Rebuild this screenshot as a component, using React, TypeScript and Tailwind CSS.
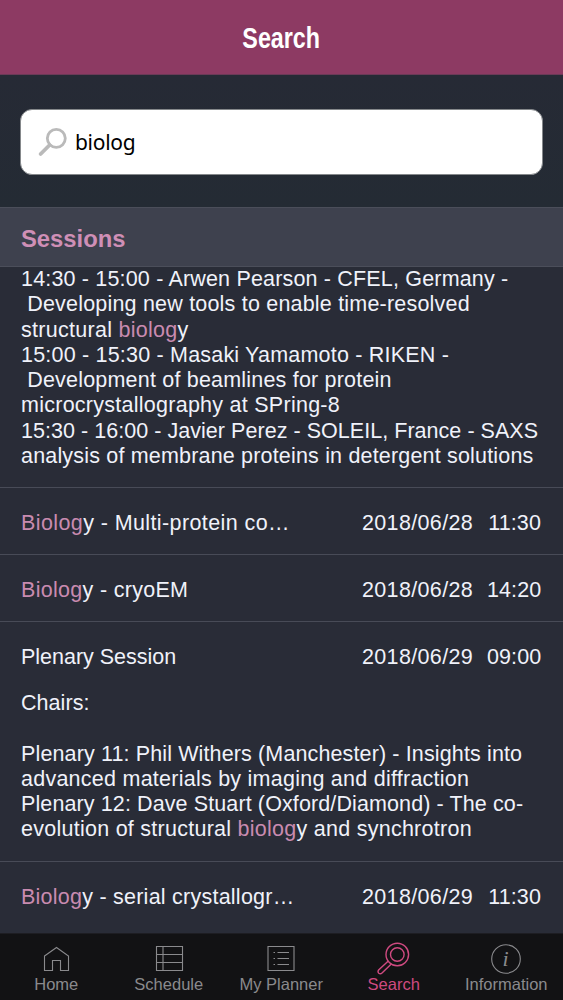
import type { ReactNode } from "react";

function Hit({ children }: { children: ReactNode }) {
  return <span className="text-[#c98bb0]">{children}</span>;
}

function Line({ track, children }: { track: string; children?: ReactNode }) {
  return (
    <div className="h-[25.3px] whitespace-pre">
      <span className={track}>{children}</span>
    </div>
  );
}

function SessionHead({ date, time, track, children }: { date: string; time: string; track: string; children: ReactNode }) {
  return (
    <div className="flex h-[66px] shrink-0 items-center pt-[5px] whitespace-pre">
      <span className={track}>{children}</span>
      <span className="ml-auto w-[125px] tracking-[0.35px]">{date}</span>
      <span className="w-[55px] pr-[1px] text-right tracking-[0.1px]">{time}</span>
    </div>
  );
}

function Tab({ label, active, children }: { label: string; active?: boolean; children: ReactNode }) {
  return (
    <div className={`flex w-[112.5px] shrink-0 flex-col items-center ${active ? "text-[#cf4a80]" : "text-[#8a8a8d]"}`}>
      <svg className="h-[44px] w-[44px] shrink-0" viewBox="0 0 44 44" fill="none" stroke="currentColor" strokeWidth={active ? 1.4 : 1.1}>
        {children}
      </svg>
      <span className="-mt-[4px] text-[16.5px] leading-[20px] whitespace-nowrap">{label}</span>
    </div>
  );
}

export default function App() {
  return (
    <div className="flex h-[1000px] w-[563px] flex-col overflow-hidden bg-[#292c37] font-['Liberation_Sans',Arial,sans-serif] text-[21.5px] leading-[25.3px] text-[#f0f2fa]">
      <header className="flex h-[75px] shrink-0 items-center justify-center border-b border-[#6b3a57] bg-[#8d3a63] pt-[2px]">
        <h1 className="scale-x-[0.79] text-[29.5px] font-bold text-white">Search</h1>
      </header>

      <div className="h-[132px] shrink-0 bg-linear-to-b from-[#262a35] to-[#242b34] px-[20px] pt-[34px]">
        <div className="flex h-[66px] items-center rounded-[12px] border border-[#85888b] bg-white pl-[16px]">
          <svg className="h-[32px] w-[32px] shrink-0" viewBox="0 0 32 32" fill="none" stroke="#bababa">
            <circle cx="19.3" cy="12.3" r="9" strokeWidth="2.8" />
            <path d="M12.6 19 L3.6 28" strokeWidth="3.8" strokeLinecap="round" />
          </svg>
          <span className="ml-[6px] pt-[1px] font-['Noto_Sans',sans-serif] text-[21px] tracking-[-0.3px] text-black">biolog</span>
        </div>
      </div>

      <div className="flex h-[60px] shrink-0 items-center border-y border-[#4b4e5a] bg-[#3e414e] pt-[4px] pl-[21px]">
        <h2 className="text-[23.8px] font-bold text-[#cf8fb6]">Sessions</h2>
      </div>

      <main className="flex min-h-0 flex-1 flex-col">
        <section className="h-[221px] shrink-0 border-b border-[#484b57] pl-[21px]">
          <Line track="tracking-[0.175px]">14:30 - 15:00 - Arwen Pearson - CFEL, Germany -</Line>
          <Line track="tracking-[0.2px]"> Developing new tools to enable time-resolved</Line>
          <Line track="tracking-[0.28px]">structural <Hit>biolog</Hit>y</Line>
          <Line track="tracking-[0.2px]">15:00 - 15:30 - Masaki Yamamoto - RIKEN -</Line>
          <Line track="tracking-[0.2px]"> Development of beamlines for protein</Line>
          <Line track="tracking-[0.26px]">microcrystallography at SPring-8</Line>
          <Line track="tracking-[0.04px]">15:30 - 16:00 - Javier Perez - SOLEIL, France - SAXS</Line>
          <Line track="tracking-[0.18px]">analysis of membrane proteins in detergent solutions</Line>
        </section>

        <section className="h-[67px] shrink-0 border-b border-[#484b57] px-[21px]">
          <SessionHead date="2018/06/28" time="11:30" track="tracking-[0.4px]"><Hit>Biolog</Hit>y - Multi-protein co…</SessionHead>
        </section>
        <section className="h-[67px] shrink-0 border-b border-[#484b57] px-[21px]">
          <SessionHead date="2018/06/28" time="14:20" track="tracking-[0.3px]"><Hit>Biolog</Hit>y - cryoEM</SessionHead>
        </section>
        <section className="h-[240px] shrink-0 border-b border-[#484b57] px-[21px]">
          <SessionHead date="2018/06/29" time="09:00" track="tracking-[-0.01px]">Plenary Session</SessionHead>
          <div className="pt-[3px]">
            <Line track="tracking-[0.05px]">Chairs:</Line>
            <Line track="tracking-[0.28px]" />
            <Line track="tracking-[0.13px]">Plenary 11: Phil Withers (Manchester) - Insights into</Line>
            <Line track="tracking-[0.25px]">advanced materials by imaging and diffraction</Line>
            <Line track="tracking-[0.11px]">Plenary 12: Dave Stuart (Oxford/Diamond) - The co-</Line>
            <Line track="tracking-[0.26px]">evolution of structural <Hit>biolog</Hit>y and synchrotron</Line>
          </div>
        </section>
        <section className="h-[71px] shrink-0 px-[21px]">
          <SessionHead date="2018/06/29" time="11:30" track="tracking-[0.24px]"><Hit>Biolog</Hit>y - serial crystallogr…</SessionHead>
        </section>
      </main>

      <nav className="flex h-[67px] shrink-0 border-t border-[#1d1d22] bg-[#121214]">
        <Tab label="Home">
          <path d="M10.5 22 L22.5 13.5 L34.5 22 V36.5 H26.5 V26.5 H18.5 V36.5 H10.5 Z" />
        </Tab>
        <Tab label="Schedule">
          <path d="M9.5 12.5 H35.5 V36.5 H9.5 Z M9.5 20.5 H35.5 M9.5 28.5 H35.5 M16 12.5 V36.5" />
        </Tab>
        <Tab label="My Planner">
          <path d="M9 12.5 H35 V36.5 H9 Z M14.5 18.5 H16 M18.5 18.5 H30 M14.5 24.5 H16 M18.5 24.5 H30 M14.5 30.5 H16 M18.5 30.5 H30" />
        </Tab>
        <Tab label="Search" active>
          <circle cx="25.3" cy="20.5" r="11.3" />
          <circle cx="25.3" cy="20.5" r="6.8" />
          <path d="M16.3 27 L6.6 36 Q5.3 38 6.8 39.3 Q8.5 40.5 10 39 L19.3 30" />
        </Tab>
        <Tab label="Information">
          <circle cx="22" cy="25" r="14.3" />
          <text x="21.5" y="32" textAnchor="middle" fill="currentColor" stroke="none" className="font-['Liberation_Serif',serif] text-[22px] italic">i</text>
        </Tab>
      </nav>
    </div>
  );
}
